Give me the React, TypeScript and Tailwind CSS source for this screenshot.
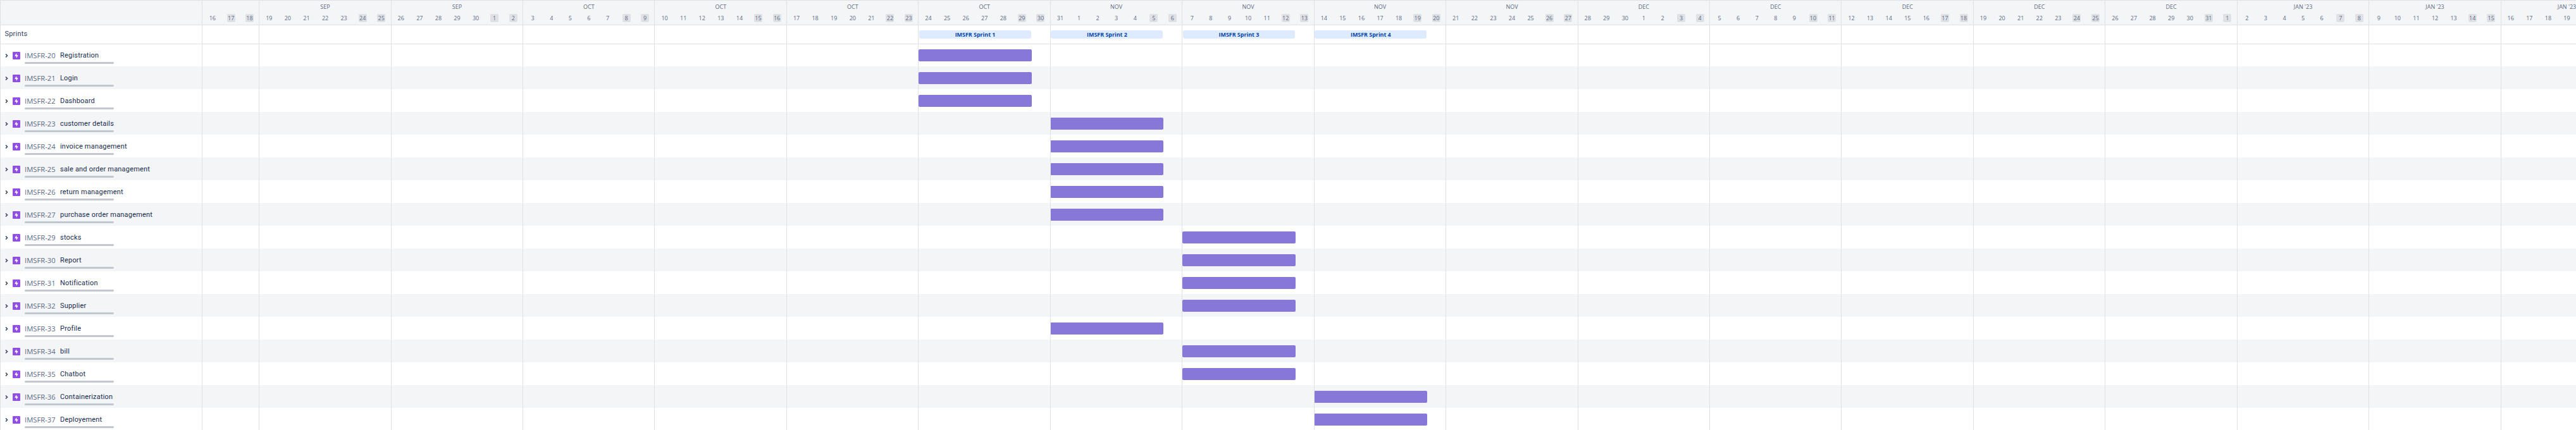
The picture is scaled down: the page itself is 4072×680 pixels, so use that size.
import React from "react";

const DAY = 208.44 / 7;
const START = new Date(2022, 8, 19);

const epics = [
  ["20", "Registration", 5],
  ["21", "Login", 5],
  ["22", "Dashboard", 5],
  ["23", "customer details", 6],
  ["24", "invoice management", 6],
  ["25", "sale and order management", 6],
  ["26", "return management", 6],
  ["27", "purchase order management", 6],
  ["29", "stocks", 7],
  ["30", "Report", 7],
  ["31", "Notification", 7],
  ["32", "Supplier", 7],
  ["33", "Profile", 6],
  ["34", "bill", 7],
  ["35", "Chatbot", 7],
  ["36", "Containerization", 8],
  ["37", "Deployement", 8],
] as const;

const dayAt = (n: number) => {
  const d = new Date(START);
  d.setDate(d.getDate() + n);
  return d;
};

const MONTHS: Record<number, string> = { 0: "JAN '23", 8: "SEP", 9: "OCT", 10: "NOV", 11: "DEC" };

type Week = { days: Date[]; label: string };
const weeks: Week[] = [{ days: [dayAt(-3), dayAt(-2), dayAt(-1)], label: "" }];
for (let w = 0; w < 18; w++) {
  const days = Array.from({ length: 7 }, (_, i) => dayAt(w * 7 + i));
  weeks.push({ days, label: MONTHS[days[3].getMonth()] });
}

function Day({ date }: { date: Date }) {
  const weekend = date.getDay() % 6 === 0;
  return (
    <div className="flex flex-1 justify-center">
      <span
        className={`flex h-[12.5px] w-[13px] items-center justify-center rounded-[2px] text-[9px] leading-none ${weekend ? "bg-[#dfe1e6]" : ""}`}
      >
        {date.getDate()}
      </span>
    </div>
  );
}

function EpicIcon() {
  return (
    <svg className="ml-[7px] size-3 shrink-0" viewBox="0 0 16 16">
      <rect width="16" height="16" rx="1.5" fill="#904ee2" />
      <path
        d="M11.4 7.4c0-.3-.2-.5-.5-.5H8.400V4c0-.5-.6-.7-.9-.2L4.700 8.400c-.2.4 0 .8.400.8H7.600V12c0 .5.600.700.900.200l2.800-4.500z"
        fill="#fff"
      />
    </svg>
  );
}

export default function App() {
  return (
    <div className="relative h-[680px] w-[4072px] overflow-hidden bg-white font-['Open_Sans',sans-serif] text-[#5e6c84]">
      <div className="flex h-10 border-b border-t border-[#dfe1e6] bg-[#f4f5f7]">
        <div className="w-[319.8px] shrink-0" />
        {weeks.map((week, i) => (
          <div
            key={i}
            className="flex shrink-0 flex-col pl-[1.4px]"
            style={{ width: week.days.length * DAY }}
          >
            <div className="mt-[4px] h-3 text-center text-[9px] leading-3">{week.label}</div>
            <div className="mt-[5px] flex">
              {week.days.map((d) => (
                <Day key={d.getTime()} date={d} />
              ))}
            </div>
          </div>
        ))}
      </div>
      <div className="flex h-[30px] border-b border-[#dfe1e6]">
        <div className="w-[320px] shrink-0 pl-[7.5px] pt-[6px] font-['Roboto',sans-serif] text-[11px] leading-4 tracking-[0.2px] text-[#344563]">
          Sprints
        </div>
        {weeks.map((week, i) => (
          <div
            key={i}
            className="shrink-0 pl-[1.5px] pt-2"
            style={{ width: week.days.length * DAY }}
          >
            {i > 5 && i < 10 && (
              <div className="flex h-[13px] w-[177px] items-center justify-center rounded-[3px] bg-[#deebff] text-[9px] font-bold leading-none tracking-[-0.05px] text-[#0747a6]">
                IMSFR Sprint {i - 5}
              </div>
            )}
          </div>
        ))}
      </div>
      <div className="-mt-px flex flex-col">
        {epics.map(([id, name, week], i) => (
          <div key={id} className={`flex h-9 shrink-0 ${i % 2 ? "bg-[#f4f5f7]" : ""}`}>
            <div className="flex w-[320px] shrink-0 flex-col pl-2">
              <div className="mt-[10px] flex h-[17px] items-center">
                <svg className="w-[5px] shrink-0" viewBox="0 0 5 8" fill="none" stroke="#344563" strokeWidth="1.6">
                  <path d="M1 1.5L3.5 4 1 6.5" />
                </svg>
                <EpicIcon />
                <span className="ml-[7px] w-[56px] whitespace-nowrap pt-px text-[11.25px]">IMSFR-{id}</span>
                <span className="whitespace-nowrap pt-[2px] font-['Roboto',sans-serif] text-[11px] tracking-[0.2px] text-[#172b4d]">
                  {name}
                </span>
              </div>
              <div className="ml-[31px] mt-[2px] h-[3px] w-[141px] rounded-full bg-[#c1c7d0]" />
            </div>
            <div
              className="mt-[9px] h-[19px] w-[178.7px] rounded-[2px] bg-[#8777d9]"
              style={{ marginLeft: 3 * DAY + week * 7 * DAY + 0.5 }}
            />
          </div>
        ))}
      </div>
      <div className="pointer-events-none absolute inset-0 flex">
        <div className="w-[320px] shrink-0 border-l border-r border-[#dfe1e6]" />
        <div className="-ml-[0.2px] flex">
          {weeks.map((week, i) => (
            <div
              key={i}
              className={`shrink-0 border-[#dfe1e6] ${i ? "border-l" : ""}`}
              style={{ width: week.days.length * DAY }}
            />
          ))}
        </div>
      </div>
    </div>
  );
}
